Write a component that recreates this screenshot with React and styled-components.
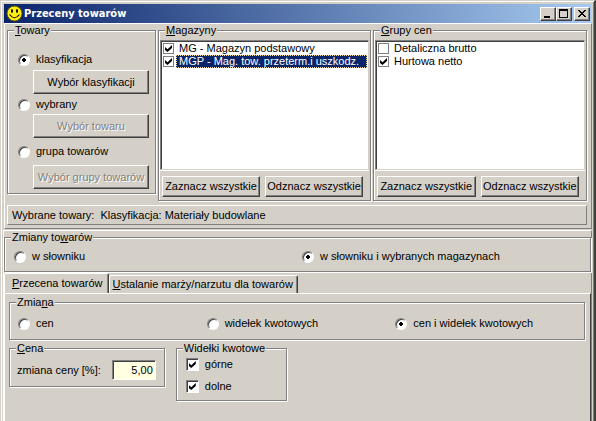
import React, { useState } from "react";
import styled, { createGlobalStyle } from "styled-components";

const GlobalStyle = createGlobalStyle`
  * {
    box-sizing: border-box;
  }

  body {
    margin: 0;
    background-color: #d4d0c8;
    color: #000;
    font-family: "Liberation Sans", Arial, sans-serif;
    font-size: 11px;
    line-height: 13px;
  }

  button, input {
    font: inherit;
    color: inherit;
  }
`;

const WindowFrame = styled.div`
  display: flex;
  flex-direction: column;
  min-height: 100vh;
  padding: 2px 2px 0 2px;
  border: 1px solid #d4d0c8;
  border-right: 2px solid #404040;
  border-bottom: none;
  box-shadow: inset 1px 1px 0 #fff, inset -1px 0 0 #808080;
`;

const TitleBar = styled.header`
  display: flex;
  align-items: center;
  height: 19px;
  margin: 1px 1px 0 1px;
  padding: 0 1px 0 2px;
  background: linear-gradient(to right, #0a246a, #a6caf0);
`;

const Title = styled.h1`
  flex: 1;
  margin: 0 0 0 1px;
  color: #fff;
  font-family: "DejaVu Sans Condensed", Tahoma, sans-serif;
  font-size: 11px;
  font-weight: bold;
  line-height: 16px;
`;

const CaptionButtons = styled.div`
  display: flex;

  button:last-child {
    margin-left: 2px;
  }
`;

const CaptionButton = styled.button`
  display: flex;
  width: 16px;
  height: 14px;
  padding: 0;
  background-color: #d4d0c8;
  border: 1px solid;
  border-color: #fff #404040 #404040 #fff;
  box-shadow: inset -1px -1px 0 #808080;
`;

const Panel = styled.section`
  display: flex;
  flex-direction: column;
  border: 1px solid;
  border-color: #fff #808080 #808080 #fff;
`;

const TopPanel = styled(Panel)`
  gap: 4px;
  margin-left: 1px;
  padding: 0 4px 3px 2px;
`;

const BottomPanel = styled(Panel)`
  flex: 1;
  margin-top: 1px;
  border-bottom: none;
`;

const Columns = styled.div`
  display: grid;
  grid-template-columns: 149fr 213fr 214fr;
  column-gap: 2px;
  align-items: start;
`;

const Group = styled.fieldset`
  min-width: 0;
  margin: 0;
  padding: 0;
  border: 1px solid #808080;
  box-shadow: 1px 1px 0 #fff, inset 1px 1px 0 #fff;
`;

const GroupTitle = styled.legend`
  margin-left: 6px;
  padding: 0 1px;
  background-color: #d4d0c8;
`;

const GroupBody = styled.div`
  padding: ${(props) => props.$padding};
`;

const GoodsOptions = styled.div`
  display: grid;
  grid-template-rows: 17px 28px 16px 31px 20px 24px;
  align-items: start;
`;

const Button = styled.button`
  height: ${(props) => (props.$tall ? "24px" : "21px")};
  padding: 0;
  overflow: hidden;
  white-space: nowrap;
  background-color: #d4d0c8;
  border: 1px solid;
  border-color: #fff #404040 #404040 #fff;
  box-shadow: inset -1px -1px 0 #808080;

  &:disabled {
    color: #808080;
    text-shadow: 1px 1px 0 #fff;
  }
`;

const GoodsButton = styled(Button)`
  margin: 0 6px 0 15px;
`;

const OptionLabel = styled.label`
  display: flex;
  align-items: center;
  gap: 6px;
  white-space: nowrap;
`;

const Radio = styled.input`
  appearance: none;
  flex: none;
  width: 12px;
  height: 12px;
  margin: 0;
  border: 1px solid;
  border-color: #808080 #fff #fff #808080;
  border-radius: 50%;
  background-color: #fff;
  box-shadow: inset 1px 1px 0 #404040;

  &:checked {
    background-image: radial-gradient(circle, #000 2px, transparent 2px);
  }
`;

const Checkbox = styled.input`
  appearance: none;
  display: grid;
  place-content: center;
  flex: none;
  width: ${(props) => (props.$flat ? "11px" : "13px")};
  height: ${(props) => (props.$flat ? "11px" : "13px")};
  margin: 0;
  border: 1px solid;
  border-color: ${(props) => (props.$flat ? "#808080" : "#808080 #fff #fff #808080")};
  background-color: #fff;
  box-shadow: ${(props) => (props.$flat ? "none" : "inset 1px 1px 0 #404040")};

  &:checked::after {
    content: "";
    width: 7px;
    height: 7px;
    background-color: #000;
    clip-path: polygon(0 28%, 36% 62%, 100% 0, 100% 42%, 36% 100%, 0 70%);
  }
`;

const CheckList = styled.ul`
  height: 130px;
  margin: 0;
  padding: 1px;
  list-style: none;
  background-color: #fff;
  border: 1px solid;
  border-color: #808080 #d4d0c8 #d4d0c8 #808080;
  box-shadow: inset 1px 1px 0 #404040, 0 1px 0 #fff;
`;

const CheckRow = styled.label`
  display: flex;
  align-items: center;
  gap: 2px;
  height: 13px;
  padding-left: 1px;
  white-space: nowrap;
`;

const CheckText = styled.span`
  flex: 1;
  padding-left: 3px;
  overflow: hidden;
  color: ${(props) => (props.$selected ? "#fff" : "#000")};
  background-color: ${(props) => (props.$selected ? "#0a246a" : "transparent")};
  outline: ${(props) => (props.$selected ? "1px dotted #f5db95" : "none")};
  outline-offset: -1px;
`;

const ButtonPair = styled.div`
  display: grid;
  grid-template-columns: 1fr 1fr;
  gap: 5px;
  padding: 6px 6px 3px 2px;
`;

const StatusLine = styled.p`
  display: flex;
  gap: 6px;
  margin: 0;
  padding: 3px 4px 2px 4px;
  border: 1px solid;
  border-color: #fff #808080 #808080 #fff;
`;

const TwoOptions = styled.div`
  display: grid;
  grid-template-columns: 1fr 1fr;
`;

const ThreeOptions = styled.div`
  display: grid;
  grid-template-columns: repeat(3, 1fr);
`;

const TabBar = styled.div`
  display: flex;
  align-items: flex-end;
  margin-top: 1px;
`;

const Tab = styled.button`
  height: ${(props) => (props.$active ? "21px" : "18px")};
  padding: ${(props) => (props.$active ? "0 5px 2px 7px" : "0 4px 0 3px")};
  margin-bottom: ${(props) => (props.$active ? "-1px" : "0")};
  white-space: nowrap;
  background-color: #d4d0c8;
  border: 1px solid;
  border-color: #fff #404040 transparent #fff;
  border-bottom: none;
  border-radius: 2px 2px 0 0;
  box-shadow: inset -1px 0 0 #808080;
`;

const TabPage = styled.div`
  flex: 1;
  padding: 2px 5px 0 4px;
  border: 1px solid;
  border-color: #fff #404040 transparent #fff;
  border-bottom: none;
`;

const Details = styled.div`
  display: flex;
  align-items: flex-start;
  gap: 11px;
  margin-top: 2px;
`;

const PriceField = styled.label`
  display: flex;
  align-items: center;
  gap: 11px;
  white-space: nowrap;
`;

const PriceInput = styled.input`
  width: 44px;
  height: 20px;
  padding: 0 2px;
  text-align: right;
  background-color: #ffffe1;
  border: 1px solid;
  border-color: #808080 #fff #fff #808080;
  border-radius: 0;
  box-shadow: inset 1px 1px 0 #404040;
`;

const ForkOptions = styled.div`
  display: grid;
  gap: 9px;
`;

const SmileyIcon = () => (
  <svg width="17" height="17" viewBox="0 0 17 17" aria-hidden="true">
    <circle cx="8.5" cy="8.5" r="7.5" fill="#ffee10" stroke="#5a5200" />
    <ellipse cx="6" cy="6" rx="1" ry="2" fill="#000" />
    <ellipse cx="11" cy="6" rx="1" ry="2" fill="#000" />
    <path d="M3.5 9.5 Q8.5 16 13.5 9.5" fill="none" stroke="#000" strokeWidth="1.2" />
  </svg>
);

const CaptionIcon = ({ children }) => (
  <svg width="14" height="12" viewBox="0 0 14 12" shapeRendering="crispEdges" aria-hidden="true">
    {children}
  </svg>
);

const RadioOption = ({ name, value, current, onPick, children }) => (
  <OptionLabel>
    <Radio type="radio" name={name} checked={current === value} onChange={() => onPick(value)} />
    <span>{children}</span>
  </OptionLabel>
);

const CheckGroup = ({ title, items }) => {
  const [rows, setRows] = useState(items);

  const setAll = (checked) => setRows(rows.map((row) => ({ ...row, checked })));
  const toggle = (name) =>
    setRows(rows.map((row) => (row.name === name ? { ...row, checked: !row.checked } : row)));

  return (
    <Group>
      <GroupTitle>{title}</GroupTitle>
      <GroupBody $padding="3px 1px 0 1px">
        <CheckList>
          {rows.map((row) => (
            <li key={row.name}>
              <CheckRow>
                <Checkbox type="checkbox" $flat checked={row.checked} onChange={() => toggle(row.name)} />
                <CheckText $selected={row.selected}>{row.name}</CheckText>
              </CheckRow>
            </li>
          ))}
        </CheckList>
        <ButtonPair>
          <Button type="button" onClick={() => setAll(true)}>Zaznacz wszystkie</Button>
          <Button type="button" onClick={() => setAll(false)}>Odznacz wszystkie</Button>
        </ButtonPair>
      </GroupBody>
    </Group>
  );
};

const warehouses = [
  { name: "MG - Magazyn podstawowy", checked: true },
  { name: "MGP - Mag. tow. przeterm.i uszkodz.", checked: true, selected: true },
];

const priceGroups = [
  { name: "Detaliczna brutto", checked: false },
  { name: "Hurtowa netto", checked: true },
];

const App = () => {
  const [goods, setGoods] = useState("klasyfikacja");
  const [scope, setScope] = useState("magazyny");
  const [change, setChange] = useState("oba");
  const [tab, setTab] = useState("przecena");

  return (
    <>
      <GlobalStyle />
      <WindowFrame>
        <TitleBar>
          <SmileyIcon />
          <Title>Przeceny towarów</Title>
          <CaptionButtons>
            <CaptionButton type="button" aria-label="Minimalizuj">
              <CaptionIcon><path d="M3 8h6v2H3z" /></CaptionIcon>
            </CaptionButton>
            <CaptionButton type="button" aria-label="Maksymalizuj">
              <CaptionIcon><path fillRule="evenodd" d="M2 1h9v9H2zM3 3v6h7V3z" /></CaptionIcon>
            </CaptionButton>
            <CaptionButton type="button" aria-label="Zamknij">
              <CaptionIcon>
                <path d="M3 2h2v1h1v1h2V3h1V2h2v1h-1v1H9v1H8v1h1v1h1v1h1v1H9V8H8V7H6v1H5v1H3V8h1V7h1V6h1V5H5V4H4V3H3z" />
              </CaptionIcon>
            </CaptionButton>
          </CaptionButtons>
        </TitleBar>

        <TopPanel>
          <Columns>
            <Group>
              <GroupTitle><u>T</u>owary</GroupTitle>
              <GroupBody $padding="16px 0 4px 10px">
                <GoodsOptions>
                  <RadioOption name="goods" value="klasyfikacja" current={goods} onPick={setGoods}>
                    klasyfikacja
                  </RadioOption>
                  <GoodsButton type="button" $tall disabled={goods !== "klasyfikacja"}>
                    Wybór klasyfikacji
                  </GoodsButton>
                  <RadioOption name="goods" value="wybrany" current={goods} onPick={setGoods}>
                    wybrany
                  </RadioOption>
                  <GoodsButton type="button" $tall disabled={goods !== "wybrany"}>
                    Wybór towaru
                  </GoodsButton>
                  <RadioOption name="goods" value="grupa" current={goods} onPick={setGoods}>
                    grupa towarów
                  </RadioOption>
                  <GoodsButton type="button" $tall disabled={goods !== "grupa"}>
                    Wybór grupy towarów
                  </GoodsButton>
                </GoodsOptions>
              </GroupBody>
            </Group>
            <CheckGroup title={<><u>M</u>agazyny</>} items={warehouses} />
            <CheckGroup title={<><u>G</u>rupy cen</>} items={priceGroups} />
          </Columns>
          <StatusLine>
            <span>Wybrane towary:</span>
            <span>Klasyfikacja: Materiały budowlane</span>
          </StatusLine>
        </TopPanel>

        <BottomPanel>
          <Group>
            <GroupTitle>Zmiany to<u>w</u>arów</GroupTitle>
            <GroupBody $padding="6px 0 8px 9px">
              <TwoOptions>
                <RadioOption name="scope" value="slownik" current={scope} onPick={setScope}>
                  w słowniku
                </RadioOption>
                <RadioOption name="scope" value="magazyny" current={scope} onPick={setScope}>
                  w słowniku i wybranych magazynach
                </RadioOption>
              </TwoOptions>
            </GroupBody>
          </Group>

          <TabBar role="tablist">
            <Tab
              type="button"
              role="tab"
              aria-selected={tab === "przecena"}
              $active={tab === "przecena"}
              onClick={() => setTab("przecena")}
            >
              <u>P</u>rzecena towarów
            </Tab>
            <Tab
              type="button"
              role="tab"
              aria-selected={tab === "marza"}
              $active={tab === "marza"}
              onClick={() => setTab("marza")}
            >
              <u>U</u>stalanie marży/narzutu dla towarów
            </Tab>
          </TabBar>

          <TabPage role="tabpanel">
            <Group>
              <GroupTitle>Zmia<u>n</u>a</GroupTitle>
              <GroupBody $padding="8px 0 9px 8px">
                <ThreeOptions>
                  <RadioOption name="change" value="cen" current={change} onPick={setChange}>
                    cen
                  </RadioOption>
                  <RadioOption name="change" value="widelki" current={change} onPick={setChange}>
                    widełek kwotowych
                  </RadioOption>
                  <RadioOption name="change" value="oba" current={change} onPick={setChange}>
                    cen i widełek kwotowych
                  </RadioOption>
                </ThreeOptions>
              </GroupBody>
            </Group>
            <Details>
              <Group>
                <GroupTitle><u>C</u>ena</GroupTitle>
                <GroupBody $padding="5px 8px 6px 7px">
                  <PriceField>
                    zmiana ceny [%]:
                    <PriceInput type="text" defaultValue="5,00" />
                  </PriceField>
                </GroupBody>
              </Group>
              <Group>
                <GroupTitle>Widełki kwotowe</GroupTitle>
                <GroupBody $padding="3px 53px 7px 9px">
                  <ForkOptions>
                    <OptionLabel>
                      <Checkbox type="checkbox" defaultChecked />
                      górne
                    </OptionLabel>
                    <OptionLabel>
                      <Checkbox type="checkbox" defaultChecked />
                      dolne
                    </OptionLabel>
                  </ForkOptions>
                </GroupBody>
              </Group>
            </Details>
          </TabPage>
        </BottomPanel>
      </WindowFrame>
    </>
  );
};

export default App;
